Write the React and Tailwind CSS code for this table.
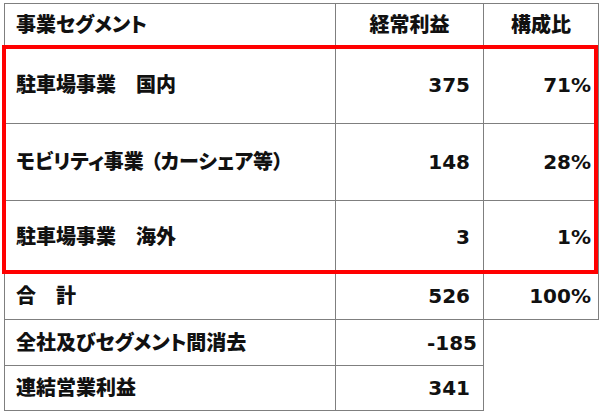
import React from "react";

const rows = [
    { name: "駐車場事業　国内", profit: "375", ratio: "71%", h: "h-[77px]" },
    { name: "モビリティ事業 （カーシェア等）", profit: "148", ratio: "28%", h: "h-[77px]" },
    { name: "駐車場事業　海外", profit: "3", ratio: "1%", h: "h-[72px]" },
];

const cell = "border border-[#7f7f7f] align-middle";

export default function App() {
    return (
        <div className="relative w-[600px] h-[413px] bg-white text-[#111] font-black text-[20px] [font-family:'DejaVu_Sans','Noto_Sans_CJK_JP',sans-serif] [font-feature-settings:'palt']">
            <div className="pt-[3px] pl-[4px]">
                <table className="border-collapse table-fixed w-[594px]">
                    <colgroup>
                        <col className="w-[331px]" />
                        <col className="w-[148px]" />
                        <col className="w-[115px]" />
                    </colgroup>
                    <tbody>
                        <tr className="h-[43px]">
                            <td className={`${cell} pl-[11px]`}>事業セグメント</td>
                            <td className={`${cell} text-center`}>経常利益</td>
                            <td className={`${cell} text-center`}>構成比</td>
                        </tr>
                        {rows.map((r) => (
                            <tr key={r.name} className={r.h}>
                                <td className={`${cell} pl-[11px]`}>{r.name}</td>
                                <td className={`${cell} text-right pr-[13px]`}>{r.profit}</td>
                                <td className={`${cell} text-right pr-[7px]`}>{r.ratio}</td>
                            </tr>
                        ))}
                        <tr className="h-[47px]">
                            <td className={`${cell} pl-[11px]`}>合　計</td>
                            <td className={`${cell} text-right pr-[13px]`}>526</td>
                            <td className={`${cell} text-right pr-[7px]`}>100%</td>
                        </tr>
                        <tr className="h-[46px]">
                            <td className={`${cell} pl-[11px]`}>全社及びセグメント間消去</td>
                            <td className={`${cell} text-right pr-[6px]`}>-185</td>
                            <td></td>
                        </tr>
                        <tr className="h-[45px]">
                            <td className={`${cell} pl-[11px]`}>連結営業利益</td>
                            <td className={`${cell} text-right pr-[13px]`}>341</td>
                            <td></td>
                        </tr>
                    </tbody>
                </table>
            </div>
            <div className="absolute left-[2px] top-[45px] w-[596px] h-[229px] border-4 border-[#ff0000] pointer-events-none" />
        </div>
    );
}
